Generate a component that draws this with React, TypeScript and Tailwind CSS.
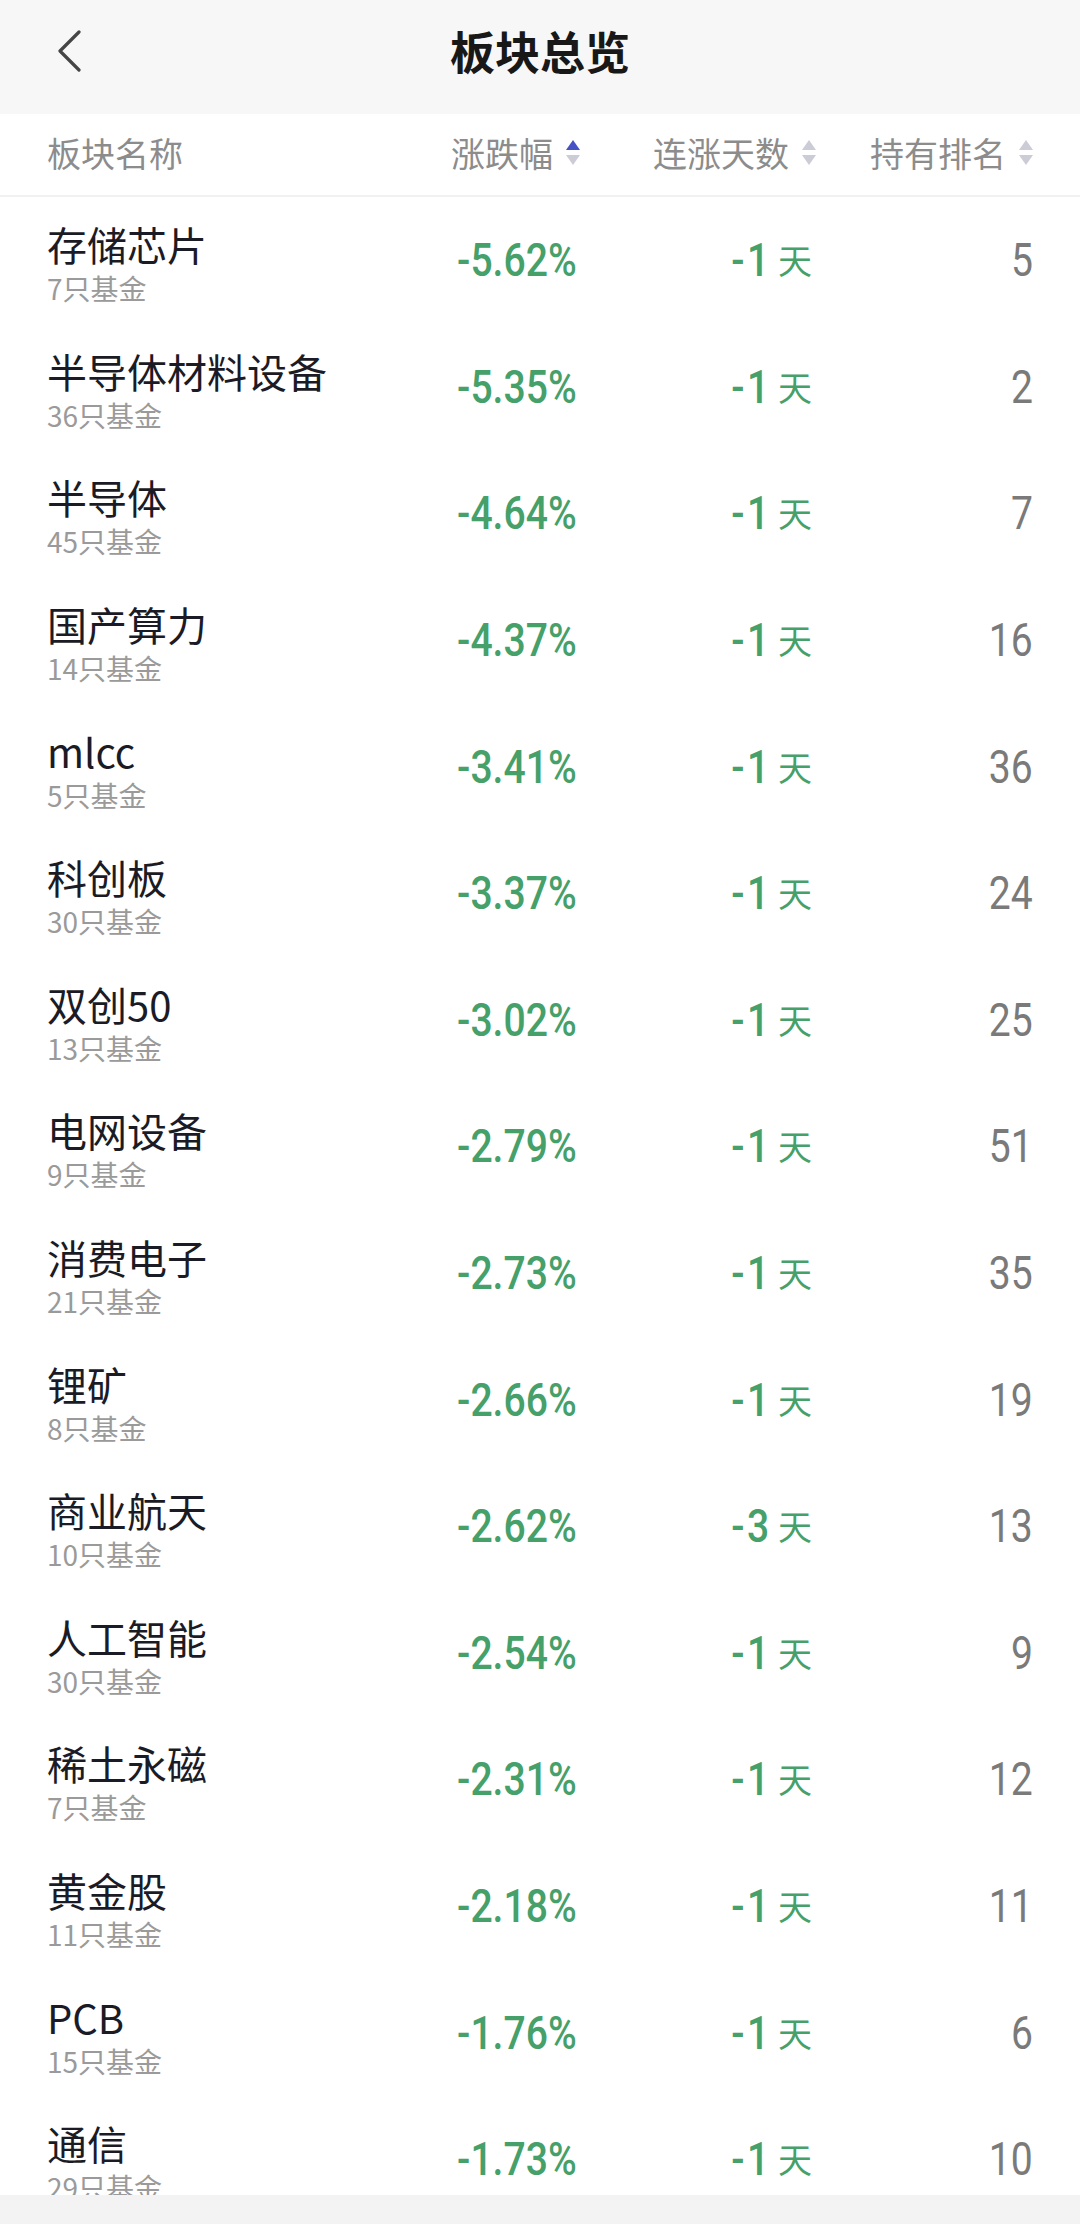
type Sector = {
  name: string
  funds: number
  change: string
  streak: number
  rank: number
}

const sectors: Sector[] = [
  { name: "存储芯片", funds: 7, change: "-5.62%", streak: -1, rank: 5 },
  { name: "半导体材料设备", funds: 36, change: "-5.35%", streak: -1, rank: 2 },
  { name: "半导体", funds: 45, change: "-4.64%", streak: -1, rank: 7 },
  { name: "国产算力", funds: 14, change: "-4.37%", streak: -1, rank: 16 },
  { name: "mlcc", funds: 5, change: "-3.41%", streak: -1, rank: 36 },
  { name: "科创板", funds: 30, change: "-3.37%", streak: -1, rank: 24 },
  { name: "双创50", funds: 13, change: "-3.02%", streak: -1, rank: 25 },
  { name: "电网设备", funds: 9, change: "-2.79%", streak: -1, rank: 51 },
  { name: "消费电子", funds: 21, change: "-2.73%", streak: -1, rank: 35 },
  { name: "锂矿", funds: 8, change: "-2.66%", streak: -1, rank: 19 },
  { name: "商业航天", funds: 10, change: "-2.62%", streak: -3, rank: 13 },
  { name: "人工智能", funds: 30, change: "-2.54%", streak: -1, rank: 9 },
  { name: "稀土永磁", funds: 7, change: "-2.31%", streak: -1, rank: 12 },
  { name: "黄金股", funds: 11, change: "-2.18%", streak: -1, rank: 11 },
  { name: "PCB", funds: 15, change: "-1.76%", streak: -1, rank: 6 },
  { name: "通信", funds: 29, change: "-1.73%", streak: -1, rank: 10 },
]

const cjk = "font-['Noto_Sans_CJK_SC','Noto_Sans',sans-serif]"
const num = "font-['Roboto','Liberation_Sans',sans-serif]"

function SortArrows({ active }: { active?: "up" | "down" }) {
  return (
    <span className="flex flex-col gap-[5px] ml-[13px]">
      <svg width="14" height="10" viewBox="0 0 14 10">
        <path d="M7 0 L14 10 L0 10 Z" fill={active === "up" ? "#4452c6" : "#cbccd6"} />
      </svg>
      <svg width="14" height="10" viewBox="0 0 14 10">
        <path d="M0 0 L14 0 L7 10 Z" fill={active === "down" ? "#4452c6" : "#cbccd6"} />
      </svg>
    </span>
  )
}

function Row({ s }: { s: Sector }) {
  return (
    <div className="grid grid-cols-[1fr_236px_236px_217px] items-center h-[126.6px] shrink-0 px-[47px]">
      <div className={`flex flex-col pt-[10px] ${cjk}`}>
        <span className="text-[40px] leading-[46px] text-[#1b1b26] whitespace-nowrap">{s.name}</span>
        <span className="text-[28px] leading-[42px] text-[#9a9a9a]">{s.funds}只基金</span>
      </div>
      <div className="flex justify-end pr-[3px]">
        <span className={`inline-block origin-right scale-x-[0.85] text-[46px] font-medium leading-none text-[#45a06a] ${num}`}>
          {s.change}
        </span>
      </div>
      <div className="flex justify-end items-center pr-[4px] text-[#45a06a]">
        <span className={`inline-block origin-right scale-x-[0.85] text-[46px] font-medium leading-none tracking-[3px] ${num}`}>
          {s.streak}
        </span>
        <span className={`text-[34px] leading-none ml-[6px] ${cjk}`}>天</span>
      </div>
      <div className="flex justify-end">
        <span className={`inline-block origin-right scale-x-[0.85] text-[46px] leading-none text-[#7a7a7a] ${num}`}>
          {s.rank}
        </span>
      </div>
    </div>
  )
}

export default function App() {
  return (
    <div className={`w-[1080px] h-[2224px] flex flex-col bg-white overflow-hidden ${cjk}`}>
      {/* Top bar */}
      <header className="h-[114px] shrink-0 bg-[#f7f7f7] flex items-center justify-center relative">
        <svg className="absolute left-[56px] top-[30px]" width="26" height="42" viewBox="0 0 26 42">
          <path d="M23 2 L4 21 L23 40" fill="none" stroke="#454545" strokeWidth="3.2" strokeLinecap="round" strokeLinejoin="round" />
        </svg>
        <h1 className="text-[45px] font-semibold text-[#181818] -mt-[12px]">板块总览</h1>
      </header>

      {/* Column titles */}
      <div className="h-[83px] shrink-0 grid grid-cols-[1fr_236px_236px_217px] items-center px-[47px] pb-[5px] border-b-2 border-[#f1f1f1] text-[34px] text-[#8c8c8c]">
        <span>板块名称</span>
        <span className="flex items-center justify-end">
          涨跌幅
          <SortArrows active="up" />
        </span>
        <span className="flex items-center justify-end">
          连涨天数
          <SortArrows />
        </span>
        <span className="flex items-center justify-end">
          持有排名
          <SortArrows />
        </span>
      </div>

      {/* Sector list */}
      <div className="flex-1 flex flex-col overflow-hidden">
        {sectors.map((s) => (
          <Row key={s.name} s={s} />
        ))}
      </div>

      {/* Navigation bar */}
      <div className="h-[29px] shrink-0 bg-[#f3f3f3]" />
    </div>
  )
}
